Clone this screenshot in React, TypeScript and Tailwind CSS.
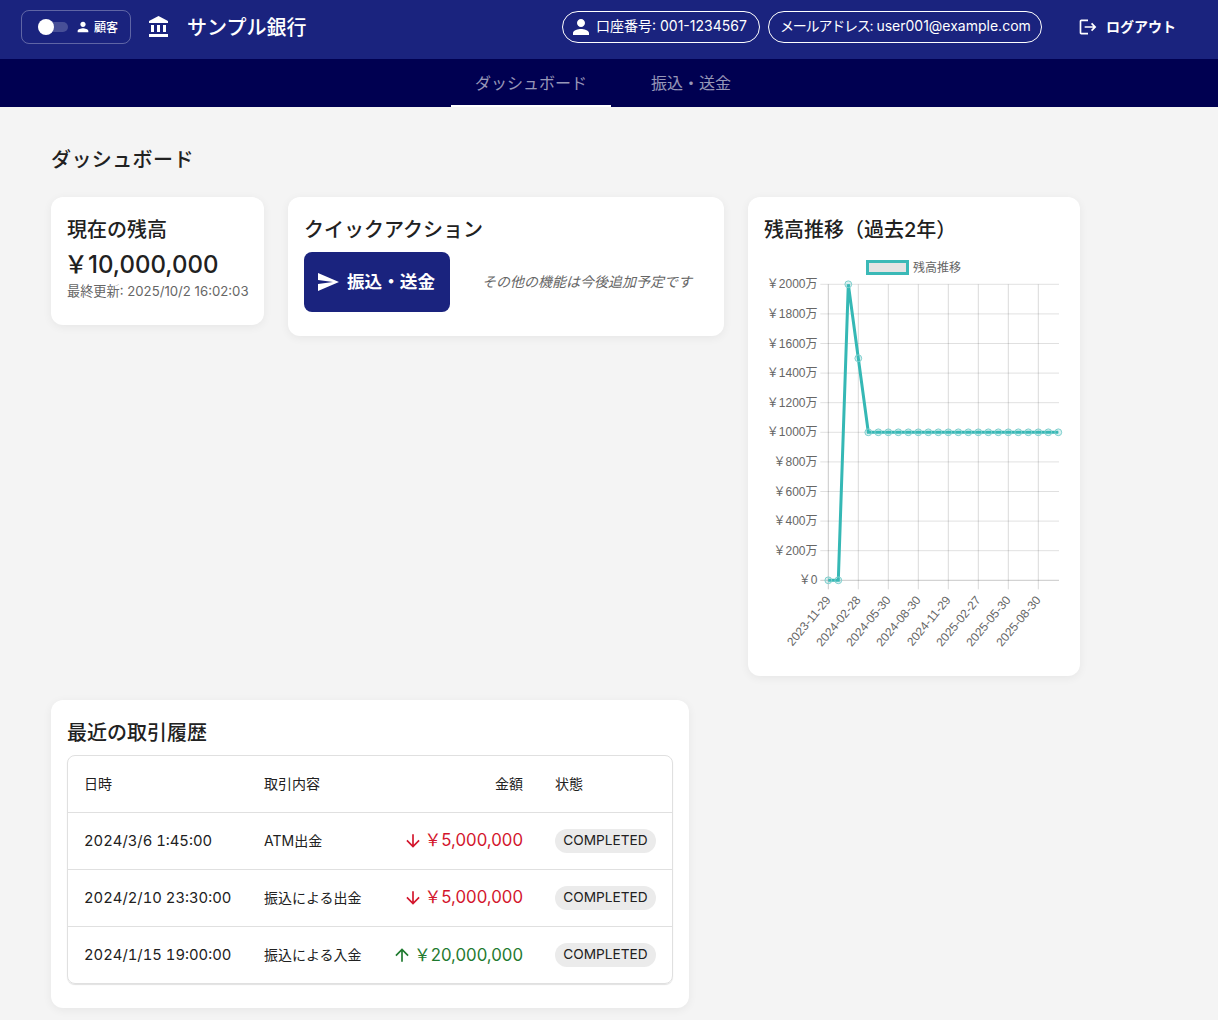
import React from 'react'

const PATHS = {
    person: 'M12 12c2.21 0 4-1.79 4-4s-1.79-4-4-4-4 1.79-4 4 1.79 4 4 4zm0 2c-2.67 0-8 1.34-8 4v2h16v-2c0-2.66-5.33-4-8-4z',
    bank: 'M4 10v7h3v-7H4zm6 0v7h3v-7h-3zM2 22h19v-3H2v3zm14-12v7h3v-7h-3zm-4.5-9L2 6v2h19V6l-9.5-5z',
    logout: 'm17 7-1.41 1.41L18.17 11H8v2h10.17l-2.58 2.58L17 17l5-5zM4 5h8V3H4c-1.1 0-2 .9-2 2v14c0 1.1.9 2 2 2h8v-2H4z',
    send: 'M2.01 21 23 12 2.01 3 2 10l15 2-15 2z',
    down: 'M20 12l-1.41-1.41L13 16.17V4h-2v12.17l-5.58-5.59L4 12l8 8 8-8z',
    up: 'm4 12 1.41 1.41L11 7.83V20h2V7.83l5.58 5.59L20 12l-8-8-8 8z',
}

const Icon = ({ d, className }: { d: string; className: string }) => (
    <svg viewBox="0 0 24 24" fill="currentColor" className={className}>
        <path d={d} />
    </svg>
)

const Card = ({ className, children }: { className: string; children: React.ReactNode }) => (
    <div className={`bg-white rounded-xl shadow-[0_2px_10px_rgba(0,0,0,0.06)] ${className}`}>{children}</div>
)

const CardTitle = ({ children }: { children: React.ReactNode }) => (
    <h2 className="text-[20px] leading-8 pt-px font-medium text-[#212121]">{children}</h2>
)

const BalanceChart = () => {
    // the svg starts at (764, 246) on the page
    const left = 64.3
    const top = 38.3
    const step = 10
    const rowH = 29.6
    const values = [0, 0, 2000, 1500, ...Array(20).fill(1000)]
    const yOf = (v: number) => top + ((2000 - v) / 200) * rowH
    const points = values.map((v, i) => ({ x: left + i * step, y: yOf(v) }))
    const yTicks = [2000, 1800, 1600, 1400, 1200, 1000, 800, 600, 400, 200, 0]
    const xLabels = ['2023-11-29', '2024-02-28', '2024-05-30', '2024-08-30', '2024-11-29', '2025-02-27', '2025-05-30', '2025-08-30']
    const textClass = "font-['Liberation_Sans','Noto_Sans_CJK_JP',sans-serif] text-[12px] fill-[#666666]"

    return (
        <svg width="316" height="414" className="block">
            <rect x="103.5" y="15.5" width="40" height="12" fill="#e4e4e4" stroke="#3bb9b7" strokeWidth="3" />
            <text x="149" y="26" className={textClass}>残高推移</text>
            {yTicks.map((v) => (
                <g key={v}>
                    <line x1={left - 8} x2={295} y1={yOf(v)} y2={yOf(v)} stroke={v === 0 ? 'rgba(0,0,0,0.22)' : 'rgba(0,0,0,0.12)'} />
                    <text x="53.5" y={yOf(v) + 4} textAnchor="end" className={textClass}>
                        {v === 0 ? '￥0' : `￥${v}万`}
                    </text>
                </g>
            ))}
            {xLabels.map((label, i) => {
                const x = left + i * 30
                const ax = x + 3
                const ay = yOf(0) + 20
                return (
                    <g key={label}>
                        <line x1={x} x2={x} y1={top} y2={yOf(0) + 9} stroke={i === 0 ? 'rgba(0,0,0,0.22)' : 'rgba(0,0,0,0.15)'} />
                        <text x={ax} y={ay} textAnchor="end" transform={`rotate(-50 ${ax} ${ay})`} className={textClass}>
                            {label}
                        </text>
                    </g>
                )
            })}
            <polyline points={points.map((p) => `${p.x},${p.y}`).join(' ')} fill="none" stroke="#35b8b5" strokeWidth="3" />
            {points.map((p) => (
                <circle key={p.x} cx={p.x} cy={p.y} r="3.4" fill="rgba(75,192,192,0.2)" stroke="#7fd0ce" strokeWidth="1" />
            ))}
        </svg>
    )
}

const transactions = [
    { date: '2024/3/6 1:45:00', description: 'ATM出金', amount: '￥5,000,000', incoming: false },
    { date: '2024/2/10 23:30:00', description: '振込による出金', amount: '￥5,000,000', incoming: false },
    { date: '2024/1/15 19:00:00', description: '振込による入金', amount: '￥20,000,000', incoming: true },
]

export default function App() {
    return (
        <div className="min-h-screen bg-[#f4f4f4] font-['Inter','Noto_Sans_CJK_JP',sans-serif] text-[#212121]">
            <header className="h-[59px] bg-[#1a237e] text-white flex items-center pl-[21px] pr-[42px] pb-[5px]">
                <div className="w-[110px] h-[34px] border border-white/30 rounded-lg flex items-center pl-4">
                    <div className="relative w-[30px] h-[10px] rounded-full bg-white/20">
                        <div className="absolute left-0 top-[-3px] w-4 h-4 rounded-full bg-white" />
                    </div>
                    <Icon d={PATHS.person} className="w-4 h-4 ml-[7px]" />
                    <span className="text-[12px] font-medium ml-[3px] pt-px">顧客</span>
                </div>
                <Icon d={PATHS.bank} className="w-6 h-6 ml-4" />
                <span className="text-[20px] font-medium ml-4 pt-[2px]">サンプル銀行</span>
                <div className="ml-auto flex items-center">
                    <div className="h-8 w-[198px] border border-white rounded-full flex items-center pl-[6px] text-[14px]">
                        <Icon d={PATHS.person} className="w-6 h-6" />
                        <span className="ml-[3px] whitespace-nowrap pb-[3px]">口座番号: 001-1234567</span>
                    </div>
                    <div className="h-8 w-[274px] border border-white rounded-full flex items-center pl-[11px] ml-2 text-[14px] whitespace-nowrap">
                        <span className="pb-[3px]">
                            <span className="tracking-[-1.2px]">メールアドレス:</span> user001@example.com
                        </span>
                    </div>
                    <div className="flex items-center ml-[36px] text-[14px] font-bold">
                        <Icon d={PATHS.logout} className="w-5 h-5" />
                        <span className="ml-[8px] pb-[2px]">ログアウト</span>
                    </div>
                </div>
            </header>

            <nav className="h-[48px] bg-[#000051] flex justify-center pl-[4px] text-[16px] text-white/60">
                <div className="w-[160px] flex items-center justify-center border-b-2 border-white pt-px">ダッシュボード</div>
                <div className="w-[160px] flex items-center justify-center">振込・送金</div>
            </nav>

            <main className="pl-[51px] pt-[37px] pb-3">
                <h1 className="text-[20px] tracking-[0.4px] leading-8 font-medium">ダッシュボード</h1>

                <div className="flex items-start gap-6 mt-[21px]">
                    <Card className="w-[213px] h-[128px] p-4">
                        <CardTitle>現在の残高</CardTitle>
                        <div className="text-[24px] leading-[37px] font-medium whitespace-nowrap -ml-[3px]">￥10,000,000</div>
                        <div className="text-[13.2px] leading-[16px] text-[#666666] whitespace-nowrap">最終更新: 2025/10/2 16:02:03</div>
                    </Card>

                    <Card className="w-[436px] h-[139px] p-4">
                        <CardTitle>クイックアクション</CardTitle>
                        <div className="flex items-center mt-[6px]">
                            <div className="w-[146px] h-[60px] rounded-lg bg-[#1a237e] text-white flex items-center pl-3">
                                <Icon d={PATHS.send} className="w-6 h-6" />
                                <span className="text-[17.6px] font-bold ml-[7px] whitespace-nowrap">振込・送金</span>
                            </div>
                            <p className="text-[14px] italic text-[#666666] ml-[32px] pb-[2px]">その他の機能は今後追加予定です</p>
                        </div>
                    </Card>

                    <Card className="w-[332px] h-[479px] p-4">
                        <CardTitle>残高推移（過去2年）</CardTitle>
                        <BalanceChart />
                    </Card>
                </div>

                <Card className="w-[638px] h-[308px] mt-6 p-4">
                    <CardTitle>最近の取引履歴</CardTitle>
                    <div className="mt-[6px] border border-[#e0e0e0] rounded-lg shadow-[0_1px_1px_rgba(0,0,0,0.12)] overflow-hidden">
                        <table className="w-full table-fixed text-[14px] border-collapse">
                            <thead>
                                <tr className="h-[56px] border-b border-[#e0e0e0]">
                                    <th className="w-[180px] pl-4 text-left font-normal">日時</th>
                                    <th className="w-[136px] pl-4 text-left font-normal">取引内容</th>
                                    <th className="pr-4 text-right font-normal">金額</th>
                                    <th className="w-[133px] pl-4 text-left font-normal">状態</th>
                                </tr>
                            </thead>
                            <tbody>
                                {transactions.map((t, i) => (
                                    <tr key={t.date} className={`h-[57px] ${i < transactions.length - 1 ? 'border-b border-[#e0e0e0]' : ''}`}>
                                        <td className="pl-4 pt-px text-[14.8px] tabular-nums whitespace-nowrap">{t.date}</td>
                                        <td className="pl-4 whitespace-nowrap">{t.description}</td>
                                        <td className={`pr-4 pt-px ${t.incoming ? 'text-[#1f7a2f]' : 'text-[#d3152c]'}`}>
                                            <div className="flex items-center justify-end text-[16.8px] whitespace-nowrap">
                                                <Icon d={t.incoming ? PATHS.up : PATHS.down} className="w-5 h-5 mr-[2px]" />
                                                {t.amount}
                                            </div>
                                        </td>
                                        <td className="pl-4">
                                            <span className="inline-flex items-center justify-center w-[101px] h-6 rounded-full bg-[#ebebeb] text-[13.7px]">COMPLETED</span>
                                        </td>
                                    </tr>
                                ))}
                            </tbody>
                        </table>
                    </div>
                </Card>
            </main>
        </div>
    )
}
